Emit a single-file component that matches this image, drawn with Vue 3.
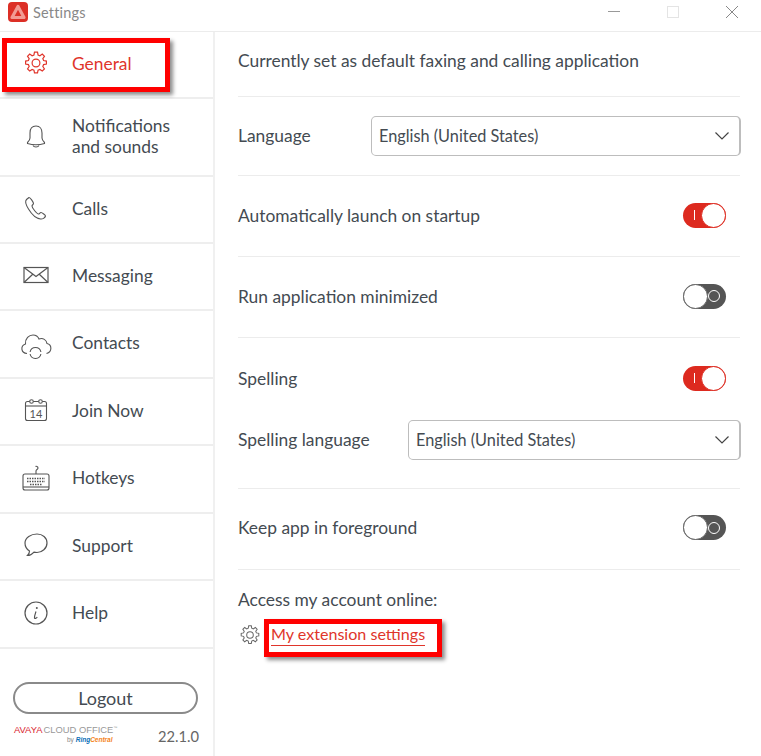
<script setup>
const items = [
  { label: ['General'], h: 67, icon: 'gear', active: true },
  { label: ['Notifications', 'and sounds'], h: 78, icon: 'bell' },
  { label: ['Calls'], h: 67, icon: 'phone' },
  { label: ['Messaging'], h: 67, icon: 'mail' },
  { label: ['Contacts'], h: 68, icon: 'cloud' },
  { label: ['Join Now'], h: 67, icon: 'cal' },
  { label: ['Hotkeys'], h: 68, icon: 'keys' },
  { label: ['Support'], h: 67, icon: 'chat' },
  { label: ['Help'], h: 68, icon: 'info' }
]
const gear = 'M10.6 2h2.8l.5 2.6 1.7.7 2.2-1.5 2 2-1.5 2.2.7 1.7 2.6.5v2.8l-2.6.5-.7 1.7 1.5 2.2-2 2-2.2-1.5-1.7.7-.5 2.6h-2.8l-.5-2.6-1.7-.7-2.2 1.5-2-2 1.5-2.2-.7-1.7-2.6-.5v-2.8l2.6-.5.7-1.7-1.5-2.2 2-2 2.2 1.5 1.7-.7z'
</script>

<template>
  <div class="window">
    <header class="titlebar">
      <svg class="logo" viewBox="0 0 20 20">
        <rect width="20" height="20" rx="4" fill="#dc2f26" />
        <path d="M10 4.500 16 15.500H4z" fill="none" stroke="#f29b94" stroke-width="3.200" stroke-linejoin="round" />
      </svg>
      <span class="title">Settings</span>
      <span class="winbtns">
        <svg width="14" height="14" viewBox="0 0 14 14"><path d="M1 6.500h12" stroke="#999" fill="none" /></svg>
        <svg width="14" height="14" viewBox="0 0 14 14"><rect x="1.500" y="1.500" width="11" height="11" stroke="#e4e4e4" fill="none" /></svg>
        <svg width="14" height="14" viewBox="0 0 14 14"><path d="M1 1l12 12M13 1 1 13" stroke="#888" fill="none" /></svg>
      </span>
    </header>
    <div class="body">
      <aside class="sidebar">
        <nav>
          <div v-for="it in items" :key="it.icon" class="nav-item" :class="{ active: it.active }" :style="{ height: it.h + 'px' }">
            <span class="nav-icon">
              <svg v-if="it.icon === 'gear'" width="26" height="26" viewBox="0 0 24 24" fill="none" stroke="#e0352b" stroke-width="1.100"><path :d="gear" /><circle cx="12" cy="12" r="3.600" /></svg>
              <svg v-else-if="it.icon === 'bell'" width="26" height="26" viewBox="0 0 26 26" fill="none" stroke="#555" stroke-width="1.100"><path d="M13 3c-4 0-6 3-6 7v5c0 2-1 3-2.500 4.500v1c5 1.500 12 1.500 17 0v-1C20 18 19 17 19 15v-5c0-4-2-7-6-7z" /><path d="M10 22.500c1 2 5 2 6 0" /></svg>
              <svg v-else-if="it.icon === 'phone'" width="26" height="26" viewBox="0 0 26 26" fill="none" stroke="#555" stroke-width="1.100"><path d="M6 2.500 3.500 4.500C2 6 3 10 5.500 14c3 5 8 9.500 12 10 2 .3 4.500-1 5-3 .2-.8-3.500-3.500-4.500-3.500-1.200 0-1.500 1.500-2.500 1.500-1.500 0-6.500-6-6.500-8 0-1 1.500-1.500 1.500-2.500C10.500 7.500 7 2 6 2.500z" /></svg>
              <svg v-else-if="it.icon === 'mail'" width="26" height="18" viewBox="0 0 26 18" fill="none" stroke="#555" stroke-width="1.200"><rect x="1" y="1.500" width="24" height="15" /><path d="M1 1.500 13 10.500 25 1.500M1 16.500l9-8.500M25 16.500l-9-8.500" /></svg>
              <svg v-else-if="it.icon === 'cloud'" width="32" height="32" viewBox="0 0 32 32" fill="none" stroke="#555" stroke-width="1.100"><path d="M7 26.500C1 26 0 19 5.500 17 5 11.500 9 8 13 8c3 0 5 1.500 6 4 4-1.500 7.500 1 8 4.500 5 1 5.500 8.500-.5 10" /><path d="M10.100 25a5.500 5.500 0 0 1 10.800 0M20.900 27a5.500 5.500 0 0 1-10.800 0" /></svg>
              <svg v-else-if="it.icon === 'cal'" width="24" height="24" viewBox="0 0 24 24" fill="none" stroke="#555" stroke-width="1.100"><rect x="1.500" y="3.500" width="21" height="19" rx="2" /><path d="M1.500 8h21" /><circle cx="7.500" cy="3.500" r="1.800" fill="#fff" /><circle cx="16.500" cy="3.500" r="1.800" fill="#fff" /><text x="12" y="20" text-anchor="middle" class="cal-text">14</text></svg>
              <svg v-else-if="it.icon === 'keys'" width="28" height="28" viewBox="0 0 28 28" fill="none" stroke="#555" stroke-width="1.100"><rect x="1" y="10" width="26" height="16" rx="2" /><path d="M14 10V7c0-1.500 2-1.500 2-3S14 2 13.500 2.500" /><path d="M5 14.500h18M5 17.500h18M8 20.500h12" stroke-dasharray="1.500 1" stroke-width="1.400" /><path d="M1 23h26" /></svg>
              <svg v-else-if="it.icon === 'chat'" width="26" height="26" viewBox="0 0 26 26" fill="none" stroke="#555" stroke-width="1.200"><path d="M14 2c5.500 0 10 3.500 10 9s-5 9.500-10 9.500c-1 0-2-.1-3-.4-1.500 1.700-4 3.400-6.500 3.400 1-1 2-2.500 2-4.500C4 17.500 2 14.500 2 11c0-5.500 6-9 12-9z" /></svg>
              <svg v-else width="24" height="24" viewBox="0 0 24 24" fill="none" stroke="#555" stroke-width="1.200"><circle cx="12" cy="12" r="11" /><circle cx="12.800" cy="7" r="1" fill="#555" stroke="none" /><path d="M12 10.500c-1 3-1.800 5-1.500 6.500.3 1 1.800.3 2.800-1" /></svg>
            </span>
            <span class="nav-label"><span v-for="l in it.label" :key="l" class="line">{{ l }}</span></span>
          </div>
        </nav>
        <div class="side-foot">
          <button class="logout">Logout</button>
          <div class="brand-row">
            <div class="brand">
              <div class="brand-top"><span class="avaya">AVAYA</span><span class="cloud">CLOUD OFFICE</span><sup>™</sup></div>
              <div class="brand-by"><span>by</span> <b class="ring">Ring</b><b class="central">Central</b></div>
            </div>
            <span class="version">22.1.0</span>
          </div>
        </div>
      </aside>
      <main class="main">
        <section class="row first">Currently set as default faxing and calling application</section>
        <section class="row lang">
          <span class="lang-label">Language</span>
          <div class="select grow">
            <span>English (United States)</span>
            <svg width="16" height="10" viewBox="0 0 16 10" fill="none" stroke="#444" stroke-width="1.200"><path d="M1.500 1.500 8 8l6.500-6.500" /></svg>
          </div>
        </section>
        <section class="row h81">
          <span>Automatically launch on startup</span>
          <span class="toggle on"><i class="mark"></i><i class="knob"></i></span>
        </section>
        <section class="row h81">
          <span>Run application minimized</span>
          <span class="toggle off"><i class="knob"></i><i class="ring-dot"></i></span>
        </section>
        <section class="row spell">
          <div class="spell-top">
            <span>Spelling</span>
            <span class="toggle on"><i class="mark"></i><i class="knob"></i></span>
          </div>
          <div class="spell-lang">
            <span class="spell-label">Spelling language</span>
            <div class="select grow">
              <span>English (United States)</span>
              <svg width="16" height="10" viewBox="0 0 16 10" fill="none" stroke="#444" stroke-width="1.200"><path d="M1.500 1.500 8 8l6.500-6.500" /></svg>
            </div>
          </div>
        </section>
        <section class="row h81 keep">
          <span>Keep app in foreground</span>
          <span class="toggle off"><i class="knob"></i><i class="ring-dot"></i></span>
        </section>
        <section class="account">
          <div>Access my account online:</div>
          <div class="ext">
            <svg width="22" height="22" viewBox="0 0 24 24" fill="none" stroke="#666" stroke-width="1.100"><path :d="gear" /><circle cx="12" cy="12" r="3.600" /></svg>
            <a class="ext-link">My extension settings</a>
          </div>
        </section>
      </main>
    </div>
    <div class="mark-box general-box"></div>
    <div class="mark-box ext-box"></div>
  </div>
</template>

<style scoped>
.window {
  position: relative;
  width: 761px;
  height: 756px;
  overflow: hidden;
  background: #fff;
  color: #444b52;
  font-family: Lato, "Open Sans", sans-serif;
  font-size: 17.400px;
}
.titlebar {
  height: 31px;
  border-bottom: 1px solid #ececec;
  display: flex;
  align-items: center;
  padding-left: 8px;
}
.logo { width: 20px; height: 20px; margin-top: -7px; }
.title { margin-left: 5px; font-size: 14.500px; color: #888; margin-top: -7px; letter-spacing: .2px; }
.winbtns { margin-left: auto; display: flex; gap: 45px; padding-right: 22px; margin-top: -7px; }
.body { display: flex; height: 724px; }
.sidebar {
  width: 213px;
  border-right: 2px solid #f0f0f0;
  display: flex;
  flex-direction: column;
  flex: none;
}
.nav-item {
  display: flex;
  align-items: center;
  border-bottom: 2px solid #eeeeee;
  box-sizing: border-box;
  padding-bottom: 3px;
}
.nav-icon {
  width: 72px;
  flex: none;
  display: flex;
  justify-content: center;
  padding-right: 1px;
  box-sizing: border-box;
}
.nav-label { display: flex; flex-direction: column; line-height: 21px; }
.line { display: block; }
.active { color: #e0352b; }
.cal-text { font-size: 11px; fill: #555; stroke: none; font-family: Lato, sans-serif; }
.side-foot { padding: 33px 14px 0 13px; }
.logout {
  display: block;
  width: 185px;
  height: 32px;
  box-sizing: border-box;
  border: 2px solid #8a8a8a;
  border-radius: 16px;
  background: #fff;
  color: #444b52;
  font: 18px Lato, sans-serif;
  padding: 0;
}
.brand-row { display: flex; justify-content: space-between; margin-top: 11px; align-items: flex-start; }
.brand { width: 110px; font-family: "Liberation Sans", sans-serif; }
.brand-top { font-size: 9.400px; line-height: 10px; white-space: nowrap; }
.brand-top sup { font-size: 4px; color: #999; vertical-align: top; line-height: 6px; }
.avaya { color: #d9232e; margin-left: 1px; }
.cloud { color: #999; margin-left: 1px; }
.brand-by { font-size: 6.500px; line-height: 9px; margin-left: 54px; color: #888; white-space: nowrap; }
.ring { color: #0a6fb8; font-style: italic; }
.central { color: #f58220; font-style: italic; }
.version { font-size: 14.700px; color: #666; margin-top: 2px; }
.main { flex: 1; padding: 0 21px 0 23px; display: flex; flex-direction: column; min-width: 0; }
.row {
  display: flex;
  align-items: center;
  justify-content: space-between;
  border-bottom: 1px solid #ececec;
  box-sizing: border-box;
}
.first { height: 65px; padding-bottom: 7px; }
.lang { height: 79px; justify-content: flex-start; }
.lang-label { width: 133px; flex: none; padding-bottom: 2px; }
.h81 { height: 81px; padding-right: 14px; padding-bottom: 2px; }
.keep { padding-bottom: 3px; }
.select {
  height: 40px;
  box-sizing: border-box;
  border: 1px solid #bdbdbd;
  border-right-width: 2px;
  border-radius: 5px;
  display: flex;
  align-items: center;
  justify-content: space-between;
  margin-right: -1px;
  padding: 0 9px 1px 7px;
  font-size: 16.300px;
}
.grow { flex: 1; }
.toggle {
  position: relative;
  display: flex;
  align-items: center;
  width: 43px;
  height: 25px;
  border-radius: 13px;
  box-sizing: border-box;
}
.toggle.on { background: #dd2a1f; justify-content: flex-end; }
.toggle.off { background: #555; }
.knob {
  display: block;
  width: 25px;
  height: 25px;
  border-radius: 50%;
  background: #fff;
  box-sizing: border-box;
  border: 1px solid #dd2a1f;
}
.off .knob { border-color: #666; }
.mark { position: absolute; left: 11px; top: 7px; width: 1px; height: 10px; background: #fff; }
.ring-dot {
  display: block;
  width: 12px;
  height: 12px;
  border: 1px solid #fff;
  border-radius: 50%;
  box-sizing: border-box;
}
.spell { flex-direction: column; align-items: stretch; justify-content: flex-start; height: 151px; }
.spell-top { display: flex; align-items: center; justify-content: space-between; height: 80px; padding-right: 14px; }
.spell-lang { display: flex; align-items: center; height: 40px; margin-top: 2px; }
.spell-label { width: 170px; flex: none; padding-bottom: 2px; }
.account { padding-top: 19px; line-height: 22px; }
.ext { display: flex; align-items: center; gap: 10px; margin-top: 12px; margin-left: 1px; }
.ext-link { color: #e0352b; border-bottom: 1px solid #e0352b; line-height: 22px; font-size: 16.100px; }
.mark-box {
  position: absolute;
  box-sizing: border-box;
  border: 5px solid #ff0000;
  box-shadow: 3px 3px 4px rgba(0, 0, 0, .45);
}
.general-box { left: 2px; top: 38px; width: 168px; height: 54px; }
.ext-box { left: 264px; top: 619px; width: 178px; height: 38px; }
</style>

<style>
html, body { margin: 0; background: #fff; }
</style>
